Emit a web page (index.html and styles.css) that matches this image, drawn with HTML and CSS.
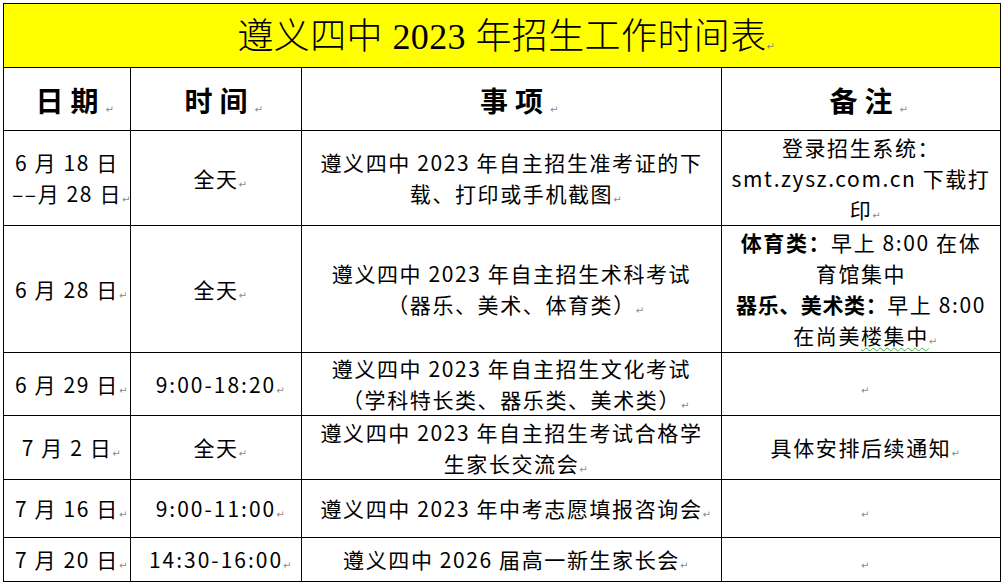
FILE: index.html
```html
<!DOCTYPE html>
<html lang="zh-CN">
<head>
<meta charset="utf-8">
<title>遵义四中2023年招生工作时间表</title>
<link rel="stylesheet" href="styles.css">
</head>
<body>
<div class="page">
<table class="schedule">
  <colgroup>
    <col class="c-date">
    <col class="c-time">
    <col class="c-item">
    <col class="c-note">
  </colgroup>
  <tr class="r-title">
    <td colspan="4" class="title">遵义四中 2023 年招生工作时间表<span class="pm">↵</span></td>
  </tr>
  <tr class="r-head">
    <th><span class="hd">日期</span><span class="pm">↵</span></th>
    <th><span class="hd">时间</span><span class="pm">↵</span></th>
    <th><span class="hd">事项</span><span class="pm">↵</span></th>
    <th><span class="hd">备注</span><span class="pm">↵</span></th>
  </tr>
  <tr class="r1">
    <td>6 月 18 日<br>––月 28 日<span class="pm">↵</span></td>
    <td>全天<span class="pm">↵</span></td>
    <td>遵义四中 2023 年自主招生准考证的下<br>载、打印或手机截图<span class="pm">↵</span></td>
    <td>登录招生系统：<br>smt.zysz.com.cn 下载打<br>印<span class="pm">↵</span></td>
  </tr>
  <tr class="r2">
    <td>6 月 28 日<span class="pm">↵</span></td>
    <td>全天<span class="pm">↵</span></td>
    <td>遵义四中 2023 年自主招生术科考试<br>（器乐、美术、体育类）<span class="pm">↵</span></td>
    <td><b>体育类：</b>早上 8:00 在体<br>育馆集中<br><b class="tight">器乐、美术类：</b>早上 8:00<br>在尚美<span class="squiggle">楼集中</span><span class="pm">↵</span></td>
  </tr>
  <tr class="r3">
    <td>6 月 29 日<span class="pm">↵</span></td>
    <td class="wide">9:00-18:20<span class="pm">↵</span></td>
    <td>遵义四中 2023 年自主招生文化考试<br>（学科特长类、器乐类、美术类）<span class="pm">↵</span></td>
    <td><span class="pm">↵</span></td>
  </tr>
  <tr class="r4">
    <td>7 月 2 日<span class="pm">↵</span></td>
    <td>全天<span class="pm">↵</span></td>
    <td>遵义四中 2023 年自主招生考试合格学<br>生家长交流会<span class="pm">↵</span></td>
    <td>具体安排后续通知<span class="pm">↵</span></td>
  </tr>
  <tr class="r5">
    <td>7 月 16 日<span class="pm">↵</span></td>
    <td class="wide">9:00-11:00<span class="pm">↵</span></td>
    <td>遵义四中 2023 年中考志愿填报咨询会<span class="pm">↵</span></td>
    <td><span class="pm">↵</span></td>
  </tr>
  <tr class="r6">
    <td>7 月 20 日<span class="pm">↵</span></td>
    <td class="wide">14:30-16:00<span class="pm">↵</span></td>
    <td>遵义四中 2026 届高一新生家长会<span class="pm">↵</span></td>
    <td><span class="pm">↵</span></td>
  </tr>
</table>
</div>
</body>
</html>
```
FILE: styles.css
```css
* {
  box-sizing: border-box;
}

html, body {
  margin: 0;
  padding: 0;
  background: #ffffff;
}

.page {
  padding: 3px 0 0 3px;
}

.schedule {
  border-collapse: collapse;
  table-layout: fixed;
  width: 997px;
  font-family: "Noto Sans CJK SC", "Noto Sans", sans-serif;
  color: #000;
}

.c-date { width: 127px; }
.c-time { width: 171px; }
.c-item { width: 420px; }
.c-note { width: 279px; }

.schedule td,
.schedule th {
  border: 1px solid #000;
  padding: 0 5px;
  text-align: center;
  vertical-align: middle;
  font-size: 21px;
  line-height: 31px;
  letter-spacing: 1.6px;
  white-space: nowrap;
  font-weight: 400;
}

.schedule td.wide {
  letter-spacing: 2px;
}

.r-title { height: 64px; }
.r-head { height: 63px; }
.r1 { height: 95px; }
.r2 { height: 127px; }
.r3 { height: 63px; }
.r4 { height: 64px; }
.r5 { height: 58px; }
.r6 { height: 44px; }

.schedule td.title {
  background: #ffff00;
  font-family: "Liberation Serif", "Noto Sans CJK SC", serif;
  font-size: 36px;
  line-height: 40px;
  letter-spacing: 0.4px;
  font-weight: 300;
  padding-top: 2px;
}

.schedule th {
  font-size: 28px;
  font-weight: 700;
  line-height: 36px;
  padding-top: 2px;
}

.hd {
  letter-spacing: 7px;
  padding-left: 7px;
}

b {
  font-weight: 700;
}

.tight {
  letter-spacing: 0.6px;
}

.squiggle {
  text-decoration: underline wavy #3cb043;
  text-decoration-thickness: 1px;
  text-underline-offset: 3px;
}

.pm {
  display: inline-block;
  width: 0;
  overflow: visible;
  font-family: "DejaVu Sans", sans-serif;
  font-size: 10px;
  line-height: 10px;
  letter-spacing: 0;
  color: #8a8a8a;
  font-weight: 400;
  vertical-align: -1px;
  text-decoration: none;
}
```
